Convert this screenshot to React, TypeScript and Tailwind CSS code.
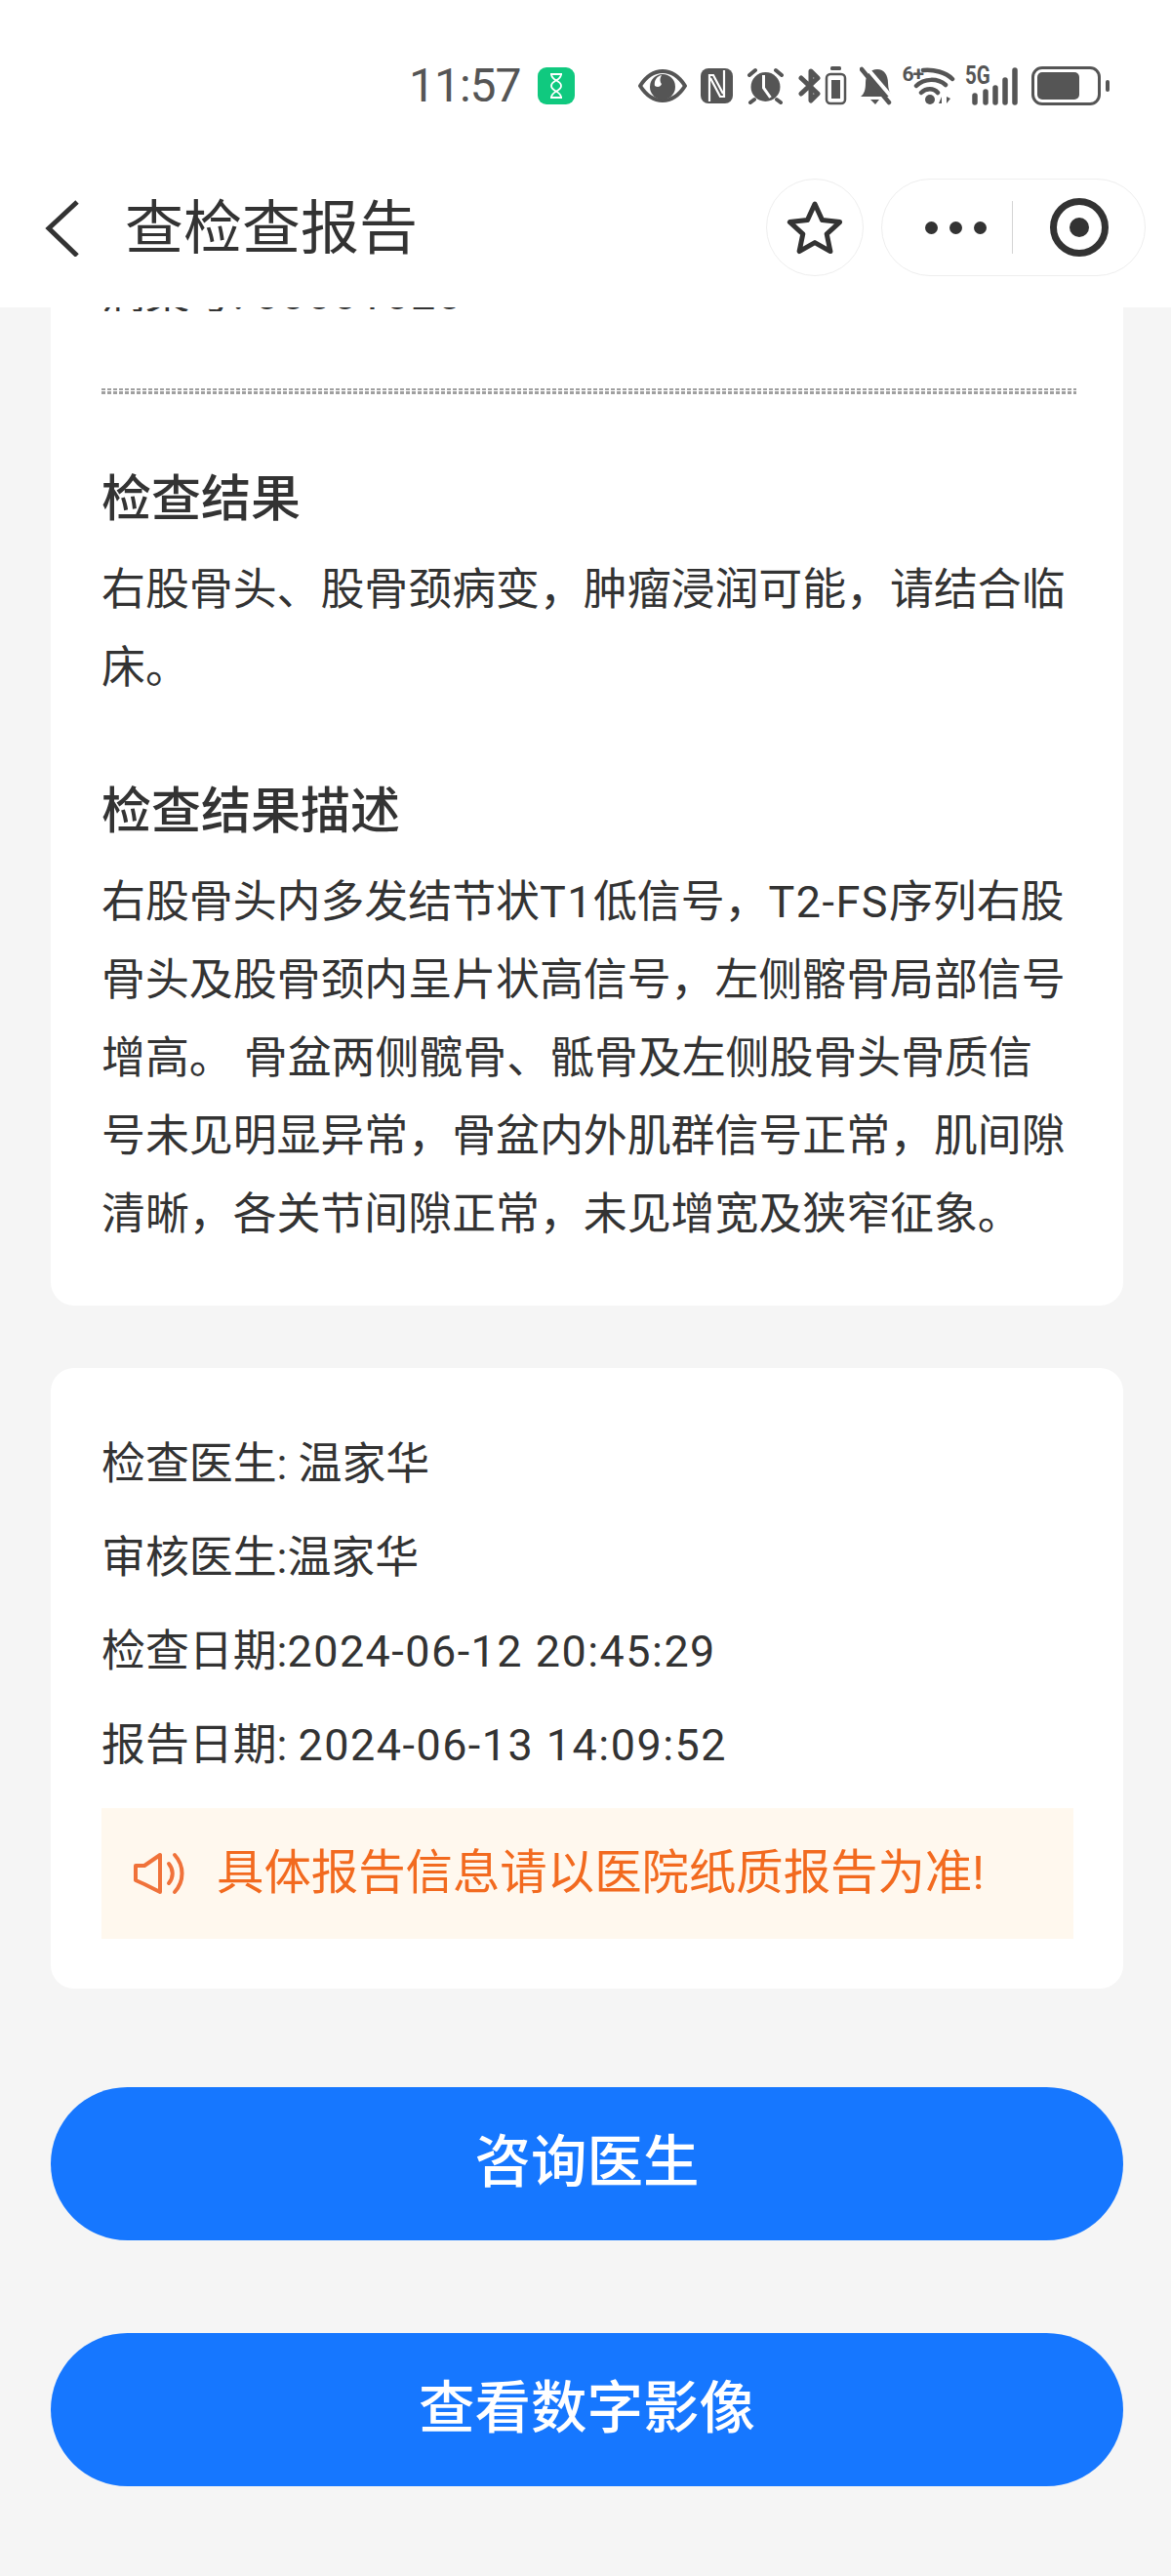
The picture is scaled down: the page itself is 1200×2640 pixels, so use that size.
import React from 'react';

const cjk = "font-['Roboto','Noto_Sans_CJK_SC',sans-serif]";

// latin runs sit wider in the original font than in Roboto
const Num = ({ children }: { children: React.ReactNode }) => <span className="tracking-[1.5px]">{children}</span>;

const StatusIcons = () => (
  <div className="flex items-center ml-[65px]">
    {/* eye */}
    <svg width="50" height="36" viewBox="0 0 50 36">
      <path d="M2 18C9 7 17 3 25 3s16 4 23 15c-7 11-15 15-23 15S9 29 2 18Z" fill="none" stroke="#555" strokeWidth="4" strokeLinejoin="round" />
      <circle cx="25" cy="19" r="13" fill="#555" />
      <path d="M24 7c-5 1-8 6-7 11 3 2 6 1 7-2-2-2-2-6 0-9Z" fill="#fff" />
    </svg>
    {/* nfc */}
    <svg width="33" height="36" viewBox="0 0 33 36" className="ml-[14px]">
      <rect width="33" height="36" rx="8" fill="#555" />
      <path d="M9 34V7h4l10 19M24 2v27h-4L10 10" fill="none" stroke="#fff" strokeWidth="2.2" />
    </svg>
    {/* alarm */}
    <svg width="39" height="38" viewBox="0 0 39 38" className="ml-[14px]">
      <circle cx="19.5" cy="20" r="15" fill="#555" />
      <path d="M17.5 8v13l7 10" fill="none" stroke="#fff" strokeWidth="3" />
      <path d="M3 8l6-5M36 8l-6-5M8 33l-4 3M31 33l4 3" stroke="#555" strokeWidth="4" strokeLinecap="round" />
    </svg>
    {/* bluetooth + battery */}
    <svg width="50" height="40" viewBox="0 0 50 40" className="ml-[14px]">
      <path d="M3 12l17 16-7 7V5l7 7L3 28" fill="none" stroke="#555" strokeWidth="5" strokeLinejoin="round" strokeLinecap="round" />
      <rect x="29" y="8" width="19" height="30" rx="4" fill="none" stroke="#555" strokeWidth="2.5" />
      <rect x="34" y="14" width="9" height="19" fill="#555" />
      <rect x="33" y="0" width="11" height="4" rx="1.5" fill="#555" />
    </svg>
    {/* muted bell */}
    <svg width="34" height="40" viewBox="0 0 34 40" className="ml-[13px]">
      <path d="M1 31c4-3 5-8 5-14 0-8 5-14 12-14s11 6 11 14c0 6 2 11 4 14Z" fill="#555" />
      <path d="M6 0l28 33" stroke="#fff" strokeWidth="4" />
      <path d="M2 3l28 34" stroke="#555" strokeWidth="4.5" strokeLinecap="round" />
      <path d="M11 34h9l-4 5Z" fill="#555" />
    </svg>
    {/* wifi */}
    <div className="relative w-[54px] h-[40px] ml-[10px]">
      <span className="absolute left-0 top-[-3px] text-[21px] leading-[22px] font-bold text-[#555] font-['Roboto',sans-serif] tracking-[-1px]">6+</span>
      <svg width="54" height="40" viewBox="0 0 54 40">
        <path d="M21 4C32 3 44 6 51 13M14 20C22 12 36 12 44 19M19 27C24 22 32 22 36 27" fill="none" stroke="#555" strokeWidth="4.5" strokeLinecap="round" />
        <circle cx="28" cy="34" r="5" fill="#555" />
        <path d="M37 38l3-7v7ZM45 31v7l4-5Z" fill="#555" />
      </svg>
    </div>
    {/* 5G signal */}
    <div className="relative w-[55px] h-[40px] ml-[10px]">
      <span className="absolute left-0 top-[-3px] text-[25px] leading-[26px] font-bold text-[#555] font-['Roboto',sans-serif] scale-x-[0.82] origin-left">5G</span>
      <svg width="55" height="40" viewBox="0 0 55 40">
        <path d="M10 30v7M21 26v11M31 22v15M41 14v23M51 4v33" stroke="#555" strokeWidth="5.5" strokeLinecap="round" />
      </svg>
    </div>
    {/* battery */}
    <div className="flex items-center ml-[13px]">
      <div className="w-[71px] h-[40px] rounded-[11px] border-[3px] border-[#555] p-[3px]">
        <div className="w-[43px] h-full rounded-[5px] bg-[#555]" />
      </div>
      <div className="w-[4px] h-[12px] rounded-full bg-[#555] ml-[5px]" />
    </div>
  </div>
);

const ResultSection = ({ title, lines }: { title: string; lines: React.ReactNode[] }) => (
  <div>
    <h3 className="text-[51px] leading-[80px] font-medium text-[#333]">{title}</h3>
    <div className="mt-[13px]">
      {lines.map((line, i) => (
        <p key={i} className="text-[44.9px] leading-[80px] text-[#333] whitespace-nowrap">{line}</p>
      ))}
    </div>
  </div>
);

const App = () => {
  const meta: React.ReactNode[] = [
    '检查医生: 温家华',
    '审核医生:温家华',
    <>检查日期:<Num>2024-06-12 20:45:29</Num></>,
    <>报告日期: <Num>2024-06-13 14:09:52</Num></>,
  ];

  return (
    <div className={`w-[1200px] h-[2640px] bg-[#f5f5f5] overflow-hidden ${cjk}`}>
      <header className="bg-white h-[315px]">
        <div className="h-[165px] flex items-center pl-[419px] pt-[11px]">
          <span className="text-[48px] leading-[52px] tracking-[-1px] text-[#555] font-['Roboto',sans-serif]">11:57</span>
          <div className="ml-[17px] w-[38px] h-[38px] rounded-[9px] bg-[#10c97f] flex items-center justify-center">
            <svg width="14" height="26" viewBox="0 0 14 26" fill="none" stroke="#fff" strokeWidth="1.8">
              <path d="M1 1h12M1 25h12M2 1c0 7 10 6 10 12s-10 5-10 12M12 1c0 7-10 6-10 12s10 5 10 12" />
            </svg>
          </div>
          <StatusIcons />
        </div>
        <div className="h-[150px] flex items-start pt-[18px]">
          <svg width="36" height="58" viewBox="0 0 36 58" className="ml-[45px] mt-[22px] shrink-0" fill="none" stroke="#333" strokeWidth="5">
            <path d="M34 2 5 29l29 28" />
          </svg>
          <h1 className="ml-[47px] mt-[4px] text-[60px] leading-[96px] text-[#333] whitespace-nowrap">查检查报告</h1>
          <div className="ml-auto mr-[26px] flex items-center gap-[18px]">
            <div className="w-[100px] h-[100px] rounded-full border border-[#eeeeee] flex items-center justify-center">
              <svg width="58" height="56" viewBox="0 0 58 56" fill="none" stroke="#333" strokeWidth="5" strokeLinejoin="round">
                <path d="M29 4l7.6 16.6 18 2-13.4 12.2 3.7 17.8L29 43.6 13.1 52.6l3.7-17.8L3.4 22.6l18-2Z" />
              </svg>
            </div>
            <div className="w-[271px] h-[100px] rounded-full border border-[#eeeeee] flex items-center">
              <div className="flex gap-[12px] ml-[44px]">
                <span className="w-[13px] h-[13px] rounded-full bg-[#333]" />
                <span className="w-[13px] h-[13px] rounded-full bg-[#333]" />
                <span className="w-[13px] h-[13px] rounded-full bg-[#333]" />
              </div>
              <div className="w-px h-[54px] bg-[#d4d4d4] ml-[26px]" />
              <div className="ml-[38px] w-[60px] h-[60px] rounded-full border-[7px] border-[#333] flex items-center justify-center">
                <span className="w-[20px] h-[20px] rounded-full bg-[#333]" />
              </div>
            </div>
          </div>
        </div>
      </header>

      <main className="pl-[52px] pr-[49px]">
        <section className="bg-white rounded-b-[24px] pl-[52px] pr-[52px] pb-[53px]">
          <div className="h-[4px] overflow-hidden">
            <p className="text-[44.9px] leading-[80px] text-[#333] mt-[-53px] whitespace-nowrap">病案号: <Num>00001020</Num></p>
          </div>
          <div className="mt-[79px] h-[6px] w-[999px] bg-[linear-gradient(#0000_0_2.5px,#fff_2.5px_3.5px,#0000_3.5px),repeating-linear-gradient(90deg,#a0a0a0_0_4px,#0000_4px_6px)]" />
          <div className="mt-[68px] flex flex-col gap-[67px]">
            <ResultSection title="检查结果" lines={['右股骨头、股骨颈病变，肿瘤浸润可能，请结合临', '床。']} />
            <ResultSection
              title="检查结果描述"
              lines={[
                <>右股骨头内多发结节状<Num>T1</Num>低信号，<Num>T2-FS</Num>序列右股</>,
                '骨头及股骨颈内呈片状高信号，左侧髂骨局部信号',
                '增高。 骨盆两侧髋骨、骶骨及左侧股骨头骨质信',
                '号未见明显异常，骨盆内外肌群信号正常，肌间隙',
                '清晰，各关节间隙正常，未见增宽及狭窄征象。',
              ]}
            />
          </div>
        </section>

        <section className="mt-[64px] bg-white rounded-[24px] px-[52px] pt-[51px] pb-[51px]">
          {meta.map((row, i) => (
            <p key={i} className="text-[44.9px] leading-[96px] text-[#333] whitespace-nowrap">{row}</p>
          ))}
          <div className="mt-[16px] h-[134px] w-[996px] bg-[#fff8ee] flex items-center pl-[33px]">
            <svg width="54" height="44" viewBox="0 0 54 44" fill="none" stroke="#f0723a" strokeWidth="4" strokeLinejoin="round" strokeLinecap="round">
              <path d="M2 14h9L27 3v38L11 33 2 29Z" />
              <path d="M36 12c5 6 5 14 0 20M42 3c10 11 10 27 0 38" />
            </svg>
            <span className="ml-[31px] text-[48.4px] leading-none text-[#f26a1f] whitespace-nowrap">具体报告信息请以医院纸质报告为准!</span>
          </div>
        </section>

        <div className="mt-[101px] flex flex-col gap-[95px]">
          <button className="h-[157px] rounded-full bg-[#1677ff] text-white text-[57.5px] font-medium">咨询医生</button>
          <button className="h-[157px] rounded-full bg-[#1677ff] text-white text-[57.5px] font-medium">查看数字影像</button>
        </div>
      </main>
    </div>
  );
};

export default App;
